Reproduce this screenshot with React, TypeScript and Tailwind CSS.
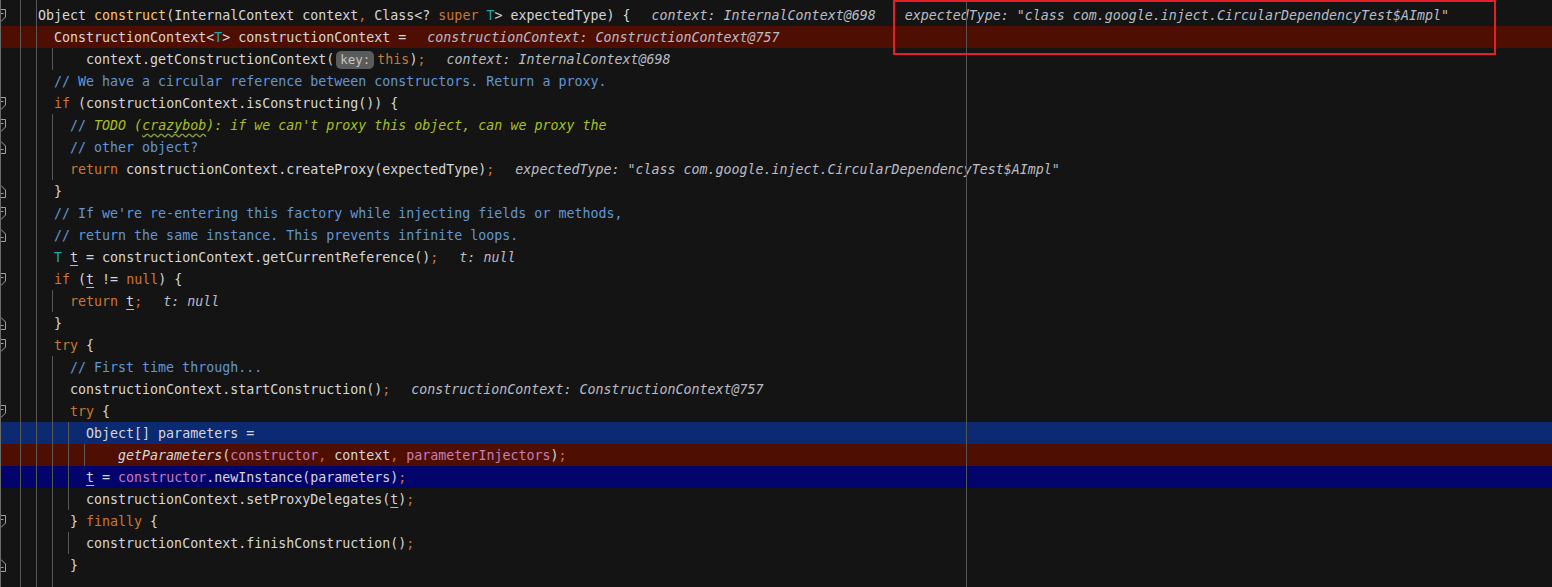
type Tok = [string, string];

type Line = {
  indent: number;
  toks: Tok[];
  bg?: string;
  fold?: "start" | "end";
};

const cls: Record<string, string> = {
  d: "text-[#d5d7db]",
  k: "text-[#cc7832]",
  m: "text-[#ffc66d]",
  tp: "text-[#20a9a9]",
  c: "text-[#6197d6]",
  todo: "text-[#a8c023] italic",
  wavy: "text-[#a8c023] italic underline decoration-wavy decoration-[#7f9a45] underline-offset-[3px]",
  f: "text-[#c77dbb]",
  s: "text-[#d5d7db] italic",
  u: "text-[#d5d7db] underline decoration-[#b9b9b9] underline-offset-[3px]",
  h: "text-[#b9bdc6] italic",
  key: "key",
};

const RED = "bg-[#4e0f02]";

const lines: Line[] = [
  {
    indent: 4,
    fold: "start",
    toks: [
      ["Object ", "d"],
      ["construct", "m"],
      ["(InternalContext context", "d"],
      [",", "k"],
      [" Class<? ", "d"],
      ["super", "k"],
      [" ", "d"],
      ["T", "tp"],
      ["> expectedType) {", "d"],
      ["context: InternalContext@698", "h"],
      ['expectedType: "class com.google.inject.CircularDependencyTest$AImpl"', "h2"],
    ],
  },
  {
    indent: 6,
    bg: RED,
    toks: [
      ["ConstructionContext<", "d"],
      ["T", "tp"],
      ["> constructionContext =", "d"],
      ["constructionContext: ConstructionContext@757", "h"],
    ],
  },
  {
    indent: 10,
    toks: [
      ["context.getConstructionContext(", "d"],
      ["key:", "key"],
      ["this", "k"],
      [")", "d"],
      [";", "k"],
      ["context: InternalContext@698", "h"],
    ],
  },
  { indent: 6, toks: [["// We have a circular reference between constructors. Return a proxy.", "c"]] },
  {
    indent: 6,
    fold: "start",
    toks: [
      ["if", "k"],
      [" (constructionContext.isConstructing()) {", "d"],
    ],
  },
  {
    indent: 8,
    fold: "start",
    toks: [
      ["// ", "c"],
      ["TODO (", "todo"],
      ["crazybob", "wavy"],
      ["): if we can't proxy this object, can we proxy the", "todo"],
    ],
  },
  { indent: 8, fold: "end", toks: [["// other object?", "c"]] },
  {
    indent: 8,
    toks: [
      ["return", "k"],
      [" constructionContext.createProxy(expectedType)", "d"],
      [";", "k"],
      ['expectedType: "class com.google.inject.CircularDependencyTest$AImpl"', "h"],
    ],
  },
  { indent: 6, fold: "end", toks: [["}", "d"]] },
  {
    indent: 6,
    fold: "start",
    toks: [["// If we're re-entering this factory while injecting fields or methods,", "c"]],
  },
  { indent: 6, fold: "end", toks: [["// return the same instance. This prevents infinite loops.", "c"]] },
  {
    indent: 6,
    toks: [
      ["T", "tp"],
      [" ", "d"],
      ["t", "u"],
      [" = constructionContext.getCurrentReference()", "d"],
      [";", "k"],
      ["t: null", "h"],
    ],
  },
  {
    indent: 6,
    fold: "start",
    toks: [
      ["if", "k"],
      [" (", "d"],
      ["t", "u"],
      [" != ", "d"],
      ["null", "k"],
      [") {", "d"],
    ],
  },
  {
    indent: 8,
    toks: [
      ["return", "k"],
      [" ", "d"],
      ["t", "u"],
      [";", "k"],
      ["t: null", "h"],
    ],
  },
  { indent: 6, fold: "end", toks: [["}", "d"]] },
  {
    indent: 6,
    fold: "start",
    toks: [
      ["try", "k"],
      [" {", "d"],
    ],
  },
  { indent: 8, toks: [["// First time through...", "c"]] },
  {
    indent: 8,
    toks: [
      ["constructionContext.startConstruction()", "d"],
      [";", "k"],
      ["constructionContext: ConstructionContext@757", "h"],
    ],
  },
  {
    indent: 8,
    fold: "start",
    toks: [
      ["try", "k"],
      [" {", "d"],
    ],
  },
  { indent: 10, bg: "bg-[#0b2a72]", toks: [["Object[] parameters =", "d"]] },
  {
    indent: 14,
    bg: RED,
    toks: [
      ["getParameters", "s"],
      ["(", "d"],
      ["constructor", "f"],
      [",", "k"],
      [" context", "d"],
      [",", "k"],
      [" ", "d"],
      ["parameterInjectors", "f"],
      [")", "d"],
      [";", "k"],
    ],
  },
  {
    indent: 10,
    bg: "bg-[#03036c]",
    toks: [
      ["t", "u"],
      [" = ", "d"],
      ["constructor", "f"],
      [".newInstance(parameters)", "d"],
      [";", "k"],
    ],
  },
  {
    indent: 10,
    toks: [
      ["constructionContext.setProxyDelegates(", "d"],
      ["t", "u"],
      [")", "d"],
      [";", "k"],
    ],
  },
  {
    indent: 8,
    fold: "start",
    toks: [
      ["} ", "d"],
      ["finally", "k"],
      [" {", "d"],
    ],
  },
  {
    indent: 10,
    toks: [
      ["constructionContext.finishConstruction()", "d"],
      [";", "k"],
    ],
  },
  { indent: 8, fold: "end", toks: [["}", "d"]] },
  { indent: 6, toks: [["", "d"]] },
];

// indent guides: x, from line, to line (inclusive)
const guides: [number, number, number][] = [
  [20, -1, 26],
  [36, -1, 26],
  [52, 2, 2],
  [52, 5, 7],
  [52, 13, 13],
  [52, 16, 26],
  [68, 19, 22],
  [68, 24, 24],
  [84, 20, 20],
];

function FoldMark({ kind }: { kind: "start" | "end" }) {
  return (
    <svg width="6" height="13" viewBox="0 0 6 13" className="block">
      {kind === "start" ? (
        <path d="M0 0.5 H5.5 V8 L1 12.5" fill="none" stroke="#a0a0a0" strokeWidth="1" />
      ) : (
        <path d="M0 12.5 H5.5 V5 L1 0.5" fill="none" stroke="#a0a0a0" strokeWidth="1" />
      )}
      <path d={kind === "start" ? "M0 4.5 H3.5" : "M0 8.5 H3.5"} stroke="#a0a0a0" strokeWidth="1" />
    </svg>
  );
}

function Token({ tok }: { tok: Tok }) {
  const [text, kind] = tok;
  if (kind === "key") {
    return (
      <span className="ml-[2px] mr-[3px] inline-flex h-[18px] items-center rounded-[5px] bg-[#5b5b5b] px-[4px] text-[12.5px] leading-none text-[#c6c6c6] not-italic">
        {text}
      </span>
    );
  }
  if (kind === "h") return <span className={`ml-[21px] ${cls.h}`}>{text}</span>;
  if (kind === "h2") return <span className={`ml-[29px] ${cls.h}`}>{text}</span>;
  return <span className={cls[kind]}>{text}</span>;
}

export default function App() {
  return (
    <div className="relative h-[587px] w-[1552px] overflow-hidden bg-[#141414] font-['DejaVu_Sans_Mono',monospace] text-[13.3px]">
      <div className="flex flex-col pt-[4px]">
        {lines.map((ln, i) => (
          <div key={i} className={`flex h-[22px] items-center whitespace-pre pt-[2px] leading-[20px] ${ln.bg ?? ""}`}>
            <span className="-mt-[2px] flex w-[6px] shrink-0 items-center">
              {ln.fold ? <FoldMark kind={ln.fold} /> : null}
            </span>
            <span>{" ".repeat(ln.indent)}</span>
            {ln.toks.map((t, j) => (
              <Token key={j} tok={t} />
            ))}
          </div>
        ))}
      </div>

      {/* gutter edge, indent guides, right margin */}
      <div className="pointer-events-none absolute left-0 top-0 h-full w-px bg-[#6a6a6a]" />
      {guides.map(([x, a, b], i) => (
        <div
          key={i}
          className="pointer-events-none absolute w-px bg-[#585858]"
          style={{ left: x, top: a < 0 ? 0 : 4 + a * 22, height: (b - Math.max(a, 0) + 1) * 22 + (a < 0 ? 4 : 0) }}
        />
      ))}
      <div className="pointer-events-none absolute left-[966px] top-0 h-full w-px bg-[#555555]" />

      {/* annotation box */}
      <div className="pointer-events-none absolute left-[893px] top-0 h-[55px] w-[603px] border-2 border-[#e61e28]" />
    </div>
  );
}
